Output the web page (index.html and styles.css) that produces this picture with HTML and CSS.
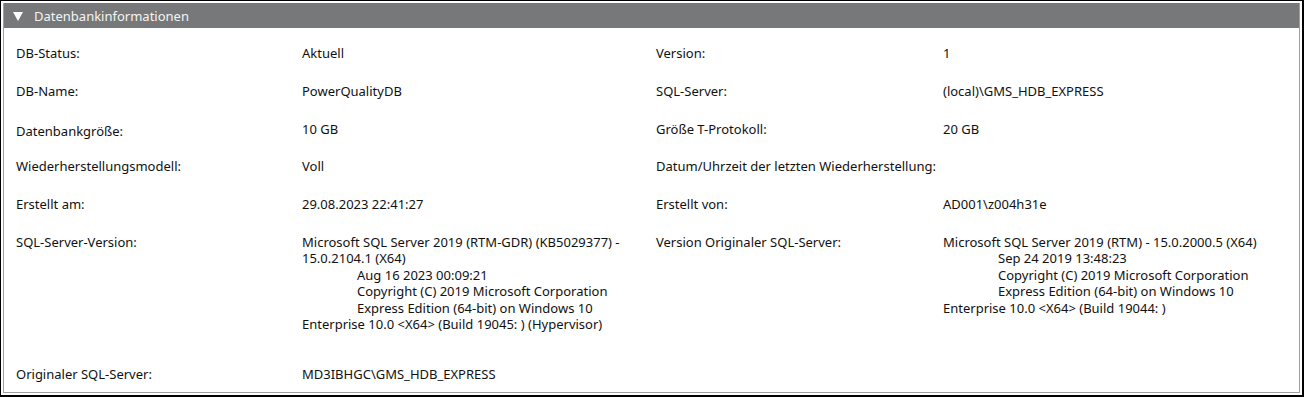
FILE: index.html
```html
<!DOCTYPE html>
<html lang="de">
<head>
    <meta charset="UTF-8">
    <title>Datenbankinformationen</title>
    <link rel="stylesheet" href="styles.css">
</head>
<body>
    <div class="frame">
        <div class="panel">
            <div class="panel-header">
                <svg class="toggle" width="10" height="10" viewBox="0 0 10 10">
                    <polygon points="0,1 10,1 5,10" fill="#ffffff"/>
                </svg>
                <span>Datenbankinformationen</span>
            </div>

            <div class="info-grid">
                <div class="label">DB-Status:</div>
                <div class="value">Aktuell</div>
                <div class="label">Version:</div>
                <div class="value">1</div>

                <div class="label">DB-Name:</div>
                <div class="value">PowerQualityDB</div>
                <div class="label">SQL-Server:</div>
                <div class="value">(local)\GMS_HDB_EXPRESS</div>

                <div class="label low">Datenbankgröße:</div>
                <div class="value">10 GB</div>
                <div class="label">Größe T-Protokoll:</div>
                <div class="value">20 GB</div>

                <div class="label">Wiederherstellungsmodell:</div>
                <div class="value">Voll</div>
                <div class="label">Datum/Uhrzeit der letzten Wiederherstellung:</div>
                <div class="value"></div>

                <div class="label">Erstellt am:</div>
                <div class="value">29.08.2023 22:41:27</div>
                <div class="label">Erstellt von:</div>
                <div class="value">AD001\z004h31e</div>

                <div class="label">SQL-Server-Version:</div>
                <div class="value">
                    <div class="line">Microsoft SQL Server 2019 (RTM-GDR) (KB5029377) -</div>
                    <div class="line">15.0.2104.1 (X64)</div>
                    <div class="line indent">Aug 16 2023 00:09:21</div>
                    <div class="line indent">Copyright (C) 2019 Microsoft Corporation</div>
                    <div class="line indent">Express Edition (64-bit) on Windows 10</div>
                    <div class="line">Enterprise 10.0 &lt;X64&gt; (Build 19045: ) (Hypervisor)</div>
                    <div class="line blank"></div>
                </div>
                <div class="label">Version Originaler SQL-Server:</div>
                <div class="value">
                    <div class="line">Microsoft SQL Server 2019 (RTM) - 15.0.2000.5 (X64)</div>
                    <div class="line indent">Sep 24 2019 13:48:23</div>
                    <div class="line indent">Copyright (C) 2019 Microsoft Corporation</div>
                    <div class="line indent">Express Edition (64-bit) on Windows 10</div>
                    <div class="line">Enterprise 10.0 &lt;X64&gt; (Build 19044: )</div>
                </div>

                <div class="label">Originaler SQL-Server:</div>
                <div class="value">MD3IBHGC\GMS_HDB_EXPRESS</div>
            </div>
        </div>
    </div>
</body>
</html>
```

FILE: styles.css
```css
html, body {
    margin: 0;
    padding: 0;
    background-color: #ffffff;
}
body {
    font-family: "Segoe UI", "Noto Sans", "Open Sans", sans-serif;
    font-size: 13px;
    color: #111111;
}
.frame {
    box-sizing: border-box;
    width: 1304px;
    height: 397px;
    border-style: solid;
    border-color: #000000;
    border-width: 1px 2px 2px 1px;
    padding: 2px;
}
.panel {
    box-sizing: border-box;
    height: 100%;
    border: 1px solid #a0a0a0;
    border-top: none;
}
.panel-header {
    height: 25px;
    background-color: #76787a;
    color: #f4f4f4;
    font-size: 13px;
    display: flex;
    align-items: center;
    padding-left: 9px;
}
.toggle {
    margin-right: 11px;
}
.info-grid {
    display: grid;
    grid-template-columns: 286px 354px 287px 1fr;
    padding: 6px 0 0 12px;
    line-height: 16px;
}
.label, .value {
    padding: 11px 0 10.8px;
    white-space: nowrap;
}
.label.low {
    padding-top: 13.5px;
    padding-bottom: 8.3px;
}
.line {
    height: 16.4px;
}
.line.blank {
    height: 12px;
}
.indent {
    padding-left: 55px;
}
```
